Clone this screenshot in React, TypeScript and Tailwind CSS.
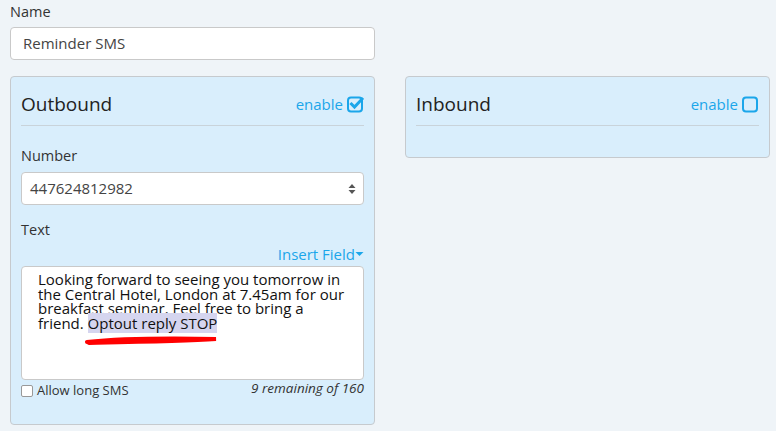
export default function App() {
  return (
    <div className="w-[776px] h-[431px] bg-[#eff4f8] overflow-hidden text-[#333] font-['Open_Sans',sans-serif] relative">
      <div className="pl-[10px] pt-[3px]">
        <label className="block text-[14.5px] leading-[17px]">Name</label>
        <div className="mt-[7px] w-[365px] h-[33px] bg-white border border-[#c9c9c9] rounded-[4px] flex items-center pl-[12px] text-[15px] text-[#444]">
          Reminder SMS
        </div>
      </div>

      <div className="flex items-start pl-[10px] pt-[16px] gap-[30px]">
        {/* Outbound */}
        <div className="w-[365px] h-[349px] bg-[#d9eefc] border border-[#c6cace] rounded-[4px] px-[10px]">
          <div className="flex items-center justify-between h-[49px] pt-[6px] border-b border-[#c9d3da]">
            <span className="text-[19px] text-[#222]">Outbound</span>
            <span className="flex items-center gap-[2px] text-[15px] text-[#1ba6ea]">
              enable
              <svg width="17" height="17" viewBox="0 0 17 17" className="ml-[2px]">
                <rect x="1" y="1.5" width="14" height="14" rx="3" fill="none" stroke="#1ba6ea" strokeWidth="2" />
                <path d="M4.5 8 L7.5 11 L15 3" fill="none" stroke="#1ba6ea" strokeWidth="3" strokeLinecap="square" />
              </svg>
            </span>
          </div>

          <label className="block mt-[21px] text-[14.5px] leading-[17px]">Number</label>
          <div className="mt-[8px] h-[33px] bg-white border border-[#c9c9c9] rounded-[4px] flex items-center justify-between pl-[8px] pr-[7px] text-[15px] text-[#444]">
            447624812982
            <svg width="8" height="12" viewBox="0 0 8 12">
              <path d="M4 1 L7.5 5 H0.5 Z" fill="#555" />
              <path d="M4 11 L7.5 7 H0.5 Z" fill="#555" />
            </svg>
          </div>

          <label className="block mt-[16px] text-[14.5px] leading-[17px]">Text</label>
          <div className="flex justify-end mt-[7px] text-[15px] leading-[18px] text-[#1ba6ea]">
            Insert Field
            <svg width="9" height="18" viewBox="0 0 9 18">
              <path d="M0.5 7 H8.5 L4.5 11 Z" fill="#1ba6ea" />
            </svg>
          </div>

          <div className="relative mt-[3px] h-[114px] bg-white border border-[#c9c9c9] rounded-[4px] pl-[16px] pr-[14px] pt-[5px] text-[15px] leading-[14.5px] text-[#111]">
            Looking forward to seeing you tomorrow in the Central Hotel, London at 7.45am for our breakfast seminar. Feel free to bring a friend.{" "}
            <span className="bg-[#d5d5ef]">Optout reply STOP</span>
            <svg className="absolute left-[63px] top-[69px]" width="134" height="10" viewBox="0 0 134 10">
              <path d="M2 6 C30 3, 80 2, 131 3 C100 5, 50 6, 4 7" fill="none" stroke="#f00" strokeWidth="4" strokeLinecap="round" />
            </svg>
          </div>

          <div className="flex items-center justify-between mt-[1px] text-[13px]">
            <span className="flex items-center gap-[4px] text-[#333]">
              <span className="w-[12px] h-[12px] bg-white border border-[#999] rounded-[2px]" />
              Allow long SMS
            </span>
            <span className="italic text-[13.5px] text-[#333] -mt-[5px]">9 remaining of 160</span>
          </div>
        </div>

        {/* Inbound */}
        <div className="w-[365px] h-[82px] bg-[#d9eefc] border border-[#c6cace] rounded-[4px] px-[10px]">
          <div className="flex items-center justify-between h-[49px] pt-[6px] border-b border-[#c9d3da]">
            <span className="text-[19px] text-[#222]">Inbound</span>
            <span className="flex items-center gap-[2px] text-[15px] text-[#1ba6ea]">
              enable
              <svg width="17" height="17" viewBox="0 0 17 17" className="ml-[2px]">
                <rect x="1" y="1.5" width="14" height="14" rx="3" fill="none" stroke="#1ba6ea" strokeWidth="2" />
              </svg>
            </span>
          </div>
        </div>
      </div>
    </div>
  );
}
